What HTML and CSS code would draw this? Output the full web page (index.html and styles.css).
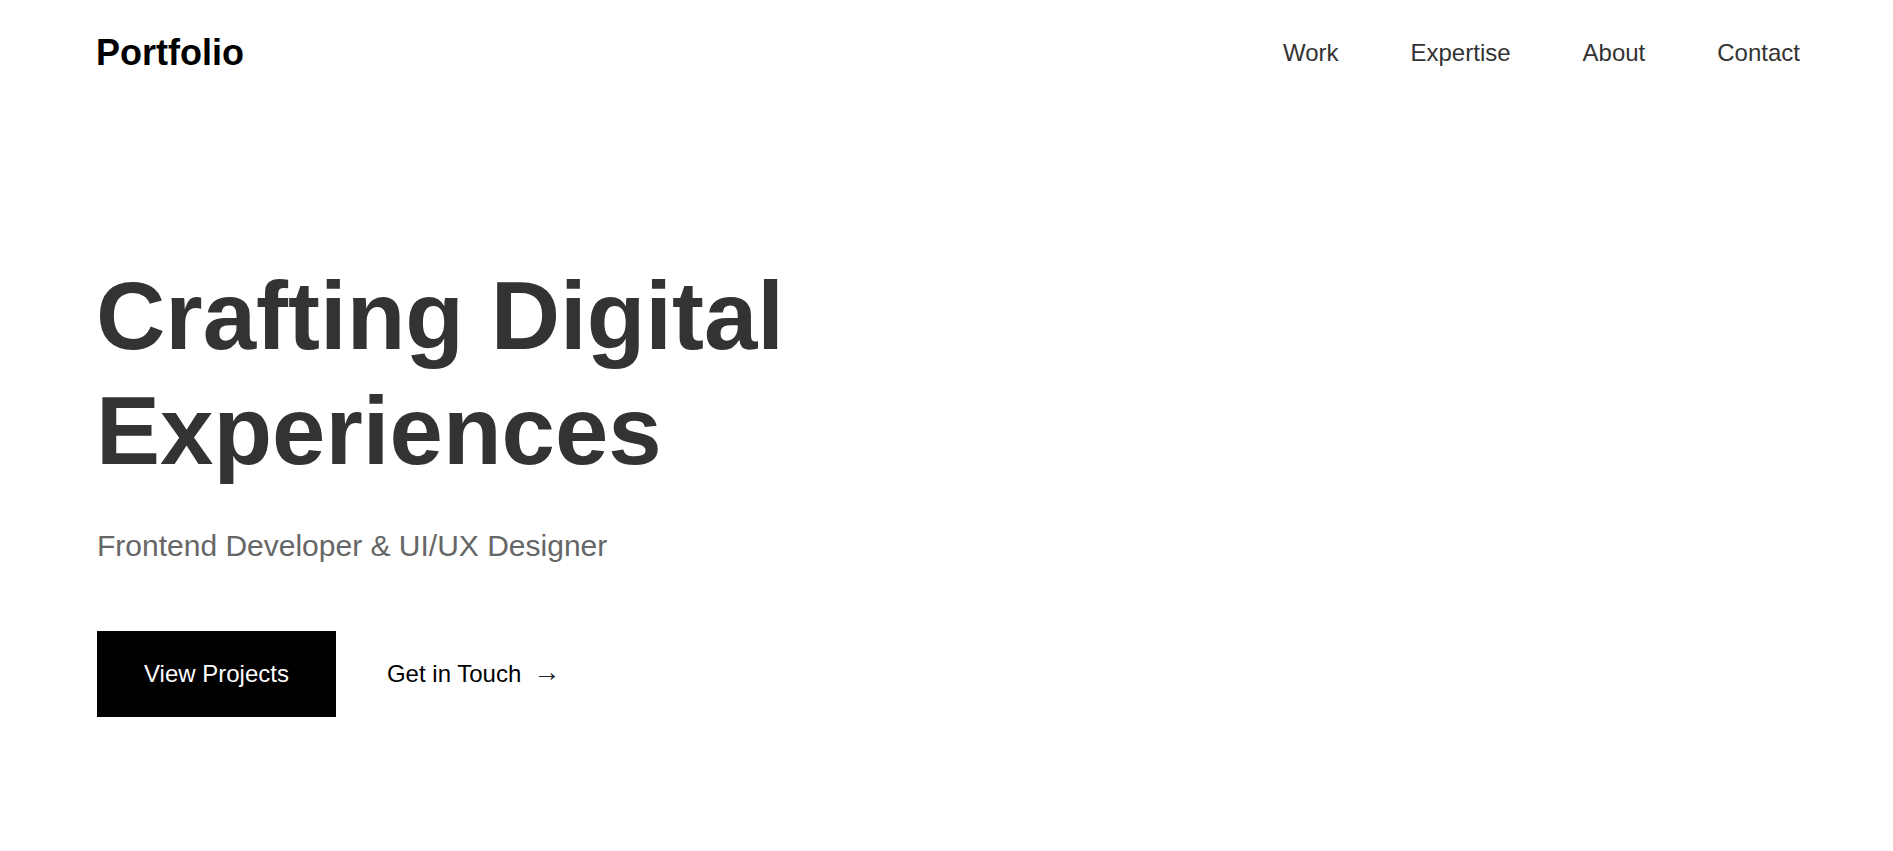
FILE: index.html
```html
<!DOCTYPE html>
<html lang="en">
<head>
<meta charset="utf-8">
<title>Portfolio</title>
<link rel="stylesheet" href="styles.css">
</head>
<body>
<header class="site-header">
  <a class="logo" href="#">Portfolio</a>
  <nav class="nav">
    <a class="nav-link" href="#">Work</a>
    <a class="nav-link" href="#">Expertise</a>
    <a class="nav-link" href="#">About</a>
    <a class="nav-link" href="#">Contact</a>
  </nav>
</header>
<main class="hero">
  <h1 class="hero-title">Crafting Digital<br>Experiences</h1>
  <p class="hero-subtitle">Frontend Developer &amp; UI/UX Designer</p>
  <div class="hero-actions">
    <a class="btn-primary" href="#">View Projects</a>
    <a class="btn-link" href="#">Get in Touch <span class="arrow">→</span></a>
  </div>
</main>
</body>
</html>
```
FILE: styles.css
```css
* { box-sizing: border-box; }
html, body { margin: 0; padding: 0; background: #fff; }
body {
  font-family: "Liberation Sans", Arial, Helvetica, sans-serif;
  color: #333;
}
a { text-decoration: none; color: inherit; }

.site-header {
  display: flex;
  justify-content: space-between;
  align-items: center;
  padding: 32px 93px 0 96px;
}
.logo {
  font-size: 36px;
  font-weight: 700;
  color: #000;
}
.nav {
  display: flex;
  gap: 72px;
}
.nav-link {
  font-size: 24px;
  color: #333;
}

.hero {
  padding: 0 96px 0 97px;
}
.hero-title {
  margin: 184px 0 0 -1px;
  font-size: 96px;
  line-height: 1.2;
  font-weight: 700;
  color: #333;
}
.hero-subtitle {
  margin: 35px 0 0;
  font-size: 30px;
  line-height: 1.5;
  color: #666;
}
.hero-actions {
  display: flex;
  align-items: center;
  gap: 51px;
  margin-top: 63px;
}
.btn-primary {
  display: inline-block;
  background: #000;
  color: #fff;
  font-size: 24px;
  line-height: 26px;
  padding: 30px 47px;
}
.btn-link {
  display: inline-flex;
  align-items: center;
  font-size: 24px;
  color: #000;
}
.arrow {
  margin-left: 12px;
  margin-bottom: 4px;
  font-size: 27px;
  line-height: 1;
  color: #222;
}
```
